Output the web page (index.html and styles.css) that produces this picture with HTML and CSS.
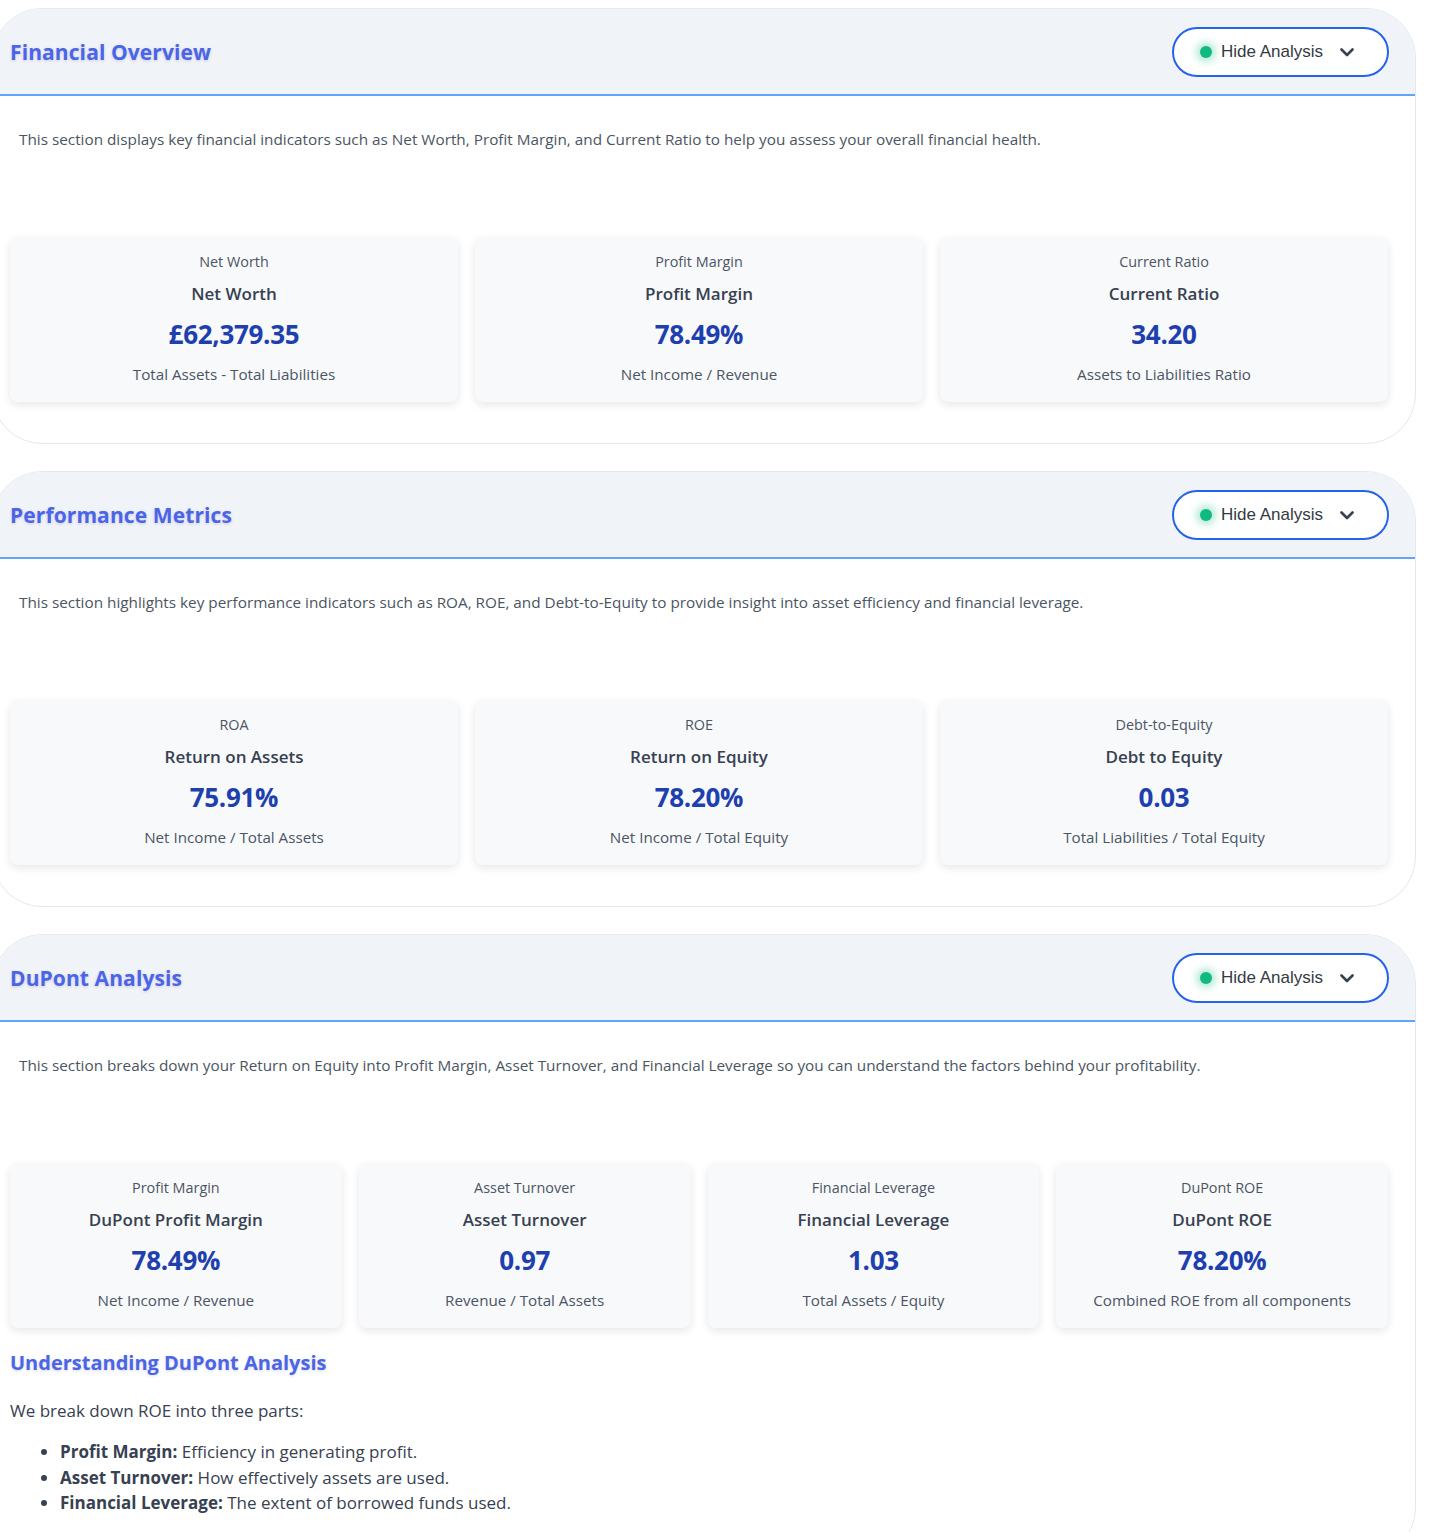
FILE: index.html
```html
<!DOCTYPE html>
<html lang="en">
<head>
<meta charset="utf-8">
<title>Financial Dashboard</title>
<link rel="stylesheet" href="styles.css">
</head>
<body>
<div class="page">

  <section class="panel">
    <header class="panel-head">
      <h2 class="panel-title">Financial Overview</h2>
      <button class="toggle" type="button">
        <span class="dot"></span>
        <span class="toggle-label">Hide Analysis</span>
        <svg class="chev" width="14" height="9" viewBox="0 0 14 9"><path d="M1.5 1.5 L7 7 L12.5 1.5" fill="none" stroke="#374151" stroke-width="2.6" stroke-linecap="round" stroke-linejoin="round"/></svg>
      </button>
    </header>
    <div class="panel-body">
      <p class="desc">This section displays key financial indicators such as Net Worth, Profit Margin, and Current Ratio to help you assess your overall financial health.</p>
      <div class="cards cards-3">
        <div class="card">
          <div class="card-label">Net Worth</div>
          <div class="card-title">Net Worth</div>
          <div class="card-value">£62,379.35</div>
          <div class="card-sub">Total Assets - Total Liabilities</div>
        </div>
        <div class="card">
          <div class="card-label">Profit Margin</div>
          <div class="card-title">Profit Margin</div>
          <div class="card-value">78.49%</div>
          <div class="card-sub">Net Income / Revenue</div>
        </div>
        <div class="card">
          <div class="card-label">Current Ratio</div>
          <div class="card-title">Current Ratio</div>
          <div class="card-value">34.20</div>
          <div class="card-sub">Assets to Liabilities Ratio</div>
        </div>
      </div>
    </div>
  </section>

  <section class="panel">
    <header class="panel-head">
      <h2 class="panel-title">Performance Metrics</h2>
      <button class="toggle" type="button">
        <span class="dot"></span>
        <span class="toggle-label">Hide Analysis</span>
        <svg class="chev" width="14" height="9" viewBox="0 0 14 9"><path d="M1.5 1.5 L7 7 L12.5 1.5" fill="none" stroke="#374151" stroke-width="2.6" stroke-linecap="round" stroke-linejoin="round"/></svg>
      </button>
    </header>
    <div class="panel-body">
      <p class="desc">This section highlights key performance indicators such as ROA, ROE, and Debt-to-Equity to provide insight into asset efficiency and financial leverage.</p>
      <div class="cards cards-3">
        <div class="card">
          <div class="card-label">ROA</div>
          <div class="card-title">Return on Assets</div>
          <div class="card-value">75.91%</div>
          <div class="card-sub">Net Income / Total Assets</div>
        </div>
        <div class="card">
          <div class="card-label">ROE</div>
          <div class="card-title">Return on Equity</div>
          <div class="card-value">78.20%</div>
          <div class="card-sub">Net Income / Total Equity</div>
        </div>
        <div class="card">
          <div class="card-label">Debt-to-Equity</div>
          <div class="card-title">Debt to Equity</div>
          <div class="card-value">0.03</div>
          <div class="card-sub">Total Liabilities / Total Equity</div>
        </div>
      </div>
    </div>
  </section>

  <section class="panel panel-last">
    <header class="panel-head">
      <h2 class="panel-title">DuPont Analysis</h2>
      <button class="toggle" type="button">
        <span class="dot"></span>
        <span class="toggle-label">Hide Analysis</span>
        <svg class="chev" width="14" height="9" viewBox="0 0 14 9"><path d="M1.5 1.5 L7 7 L12.5 1.5" fill="none" stroke="#374151" stroke-width="2.6" stroke-linecap="round" stroke-linejoin="round"/></svg>
      </button>
    </header>
    <div class="panel-body">
      <p class="desc">This section breaks down your Return on Equity into Profit Margin, Asset Turnover, and Financial Leverage so you can understand the factors behind your profitability.</p>
      <div class="cards cards-4">
        <div class="card">
          <div class="card-label">Profit Margin</div>
          <div class="card-title">DuPont Profit Margin</div>
          <div class="card-value">78.49%</div>
          <div class="card-sub">Net Income / Revenue</div>
        </div>
        <div class="card">
          <div class="card-label">Asset Turnover</div>
          <div class="card-title">Asset Turnover</div>
          <div class="card-value">0.97</div>
          <div class="card-sub">Revenue / Total Assets</div>
        </div>
        <div class="card">
          <div class="card-label">Financial Leverage</div>
          <div class="card-title">Financial Leverage</div>
          <div class="card-value">1.03</div>
          <div class="card-sub">Total Assets / Equity</div>
        </div>
        <div class="card">
          <div class="card-label">DuPont ROE</div>
          <div class="card-title">DuPont ROE</div>
          <div class="card-value">78.20%</div>
          <div class="card-sub">Combined ROE from all components</div>
        </div>
      </div>
      <div class="explain">
        <h3 class="explain-title">Understanding DuPont Analysis</h3>
        <p class="explain-text">We break down ROE into three parts:</p>
        <ul class="explain-list">
          <li><strong>Profit Margin:</strong> Efficiency in generating profit.</li>
          <li><strong>Asset Turnover:</strong> How effectively assets are used.</li>
          <li><strong>Financial Leverage:</strong> The extent of borrowed funds used.</li>
        </ul>
      </div>
    </div>
  </section>

</div>
</body>
</html>
```

FILE: styles.css
```css
html, body {
  margin: 0;
  padding: 0;
  background: #ffffff;
}

body {
  font-family: "Open Sans", "Noto Sans", sans-serif;
  color: #374151;
  overflow: hidden;
}

.page {
  padding-top: 8px;
  display: flex;
  flex-direction: column;
  gap: 27px;
}

.panel {
  margin-left: -8px;
  width: 1424px;
  box-sizing: border-box;
  border: 1px solid #e2e8f0;
  border-radius: 50px;
  background: #ffffff;
  overflow: hidden;
}

.panel-head {
  height: 85px;
  background: #f0f3f8;
  border-bottom: 2px solid #60a5fa;
  display: flex;
  align-items: center;
  justify-content: space-between;
  padding: 0 26px 0 17px;
}

.panel-title {
  margin: 0;
  font-size: 21px;
  font-weight: 700;
  color: #4a66e6;
  text-shadow: 0 1px 3px rgba(120, 90, 180, 0.25);
  letter-spacing: 0.1px;
}

.toggle {
  box-sizing: border-box;
  width: 217px;
  height: 50px;
  border: 2px solid #2563eb;
  border-radius: 25px;
  background: #ffffff;
  display: flex;
  align-items: center;
  padding: 0 0 0 26px;
  font-family: "Liberation Sans", Arial, sans-serif;
  font-size: 17px;
  color: #333a44;
  cursor: pointer;
}

.dot {
  width: 12px;
  height: 12px;
  border-radius: 50%;
  background: #10b981;
  box-shadow: 0 0 8px 3px rgba(16, 185, 129, 0.4);
  flex: none;
}

.toggle-label {
  margin-left: 9px;
}

.chev {
  margin-left: 17px;
  margin-top: 2px;
}

.panel-body {
  padding: 0 27px 41px 17px;
}

.desc {
  margin: 31px 0 0 0;
  padding: 0 0 0 9px;
  font-size: 15.3px;
  line-height: 24px;
  color: #4b5563;
}

.cards {
  margin-top: 86px;
  display: grid;
  gap: 17px;
}

.cards-3 {
  grid-template-columns: repeat(3, 1fr);
}

.cards-4 {
  grid-template-columns: repeat(4, 1fr);
}

.card {
  background: #f8f9fb;
  border-radius: 8px;
  box-shadow: 0 3px 8px rgba(15, 23, 42, 0.10);
  padding: 15px 8px 17px;
  text-align: center;
}

.card-label {
  font-size: 14.4px;
  line-height: 20px;
  color: #4b5563;
}

.card-title {
  margin-top: 10px;
  font-size: 17px;
  line-height: 24px;
  font-weight: 600;
  color: #374151;
}

.card-value {
  margin-top: 11px;
  font-size: 26px;
  line-height: 34px;
  font-weight: 700;
  color: #1e40af;
  letter-spacing: -0.3px;
}

.card-sub {
  margin-top: 12px;
  font-size: 15.2px;
  line-height: 22px;
  font-weight: 500;
  color: #4b5563;
}

.explain {
  margin-top: 21px;
}

.explain-title {
  margin: 0;
  font-size: 20px;
  line-height: 28px;
  font-weight: 700;
  color: #4a66e6;
  text-shadow: 0 1px 3px rgba(120, 90, 180, 0.25);
}

.explain-text {
  margin: 21px 0 0 0;
  font-size: 17px;
  line-height: 26px;
  color: #374151;
}

.explain-list {
  margin: 15px 0 0 0;
  padding-left: 50px;
  font-size: 17px;
  line-height: 25.5px;
  color: #374151;
}

.explain-list strong {
  font-weight: 700;
}
```
